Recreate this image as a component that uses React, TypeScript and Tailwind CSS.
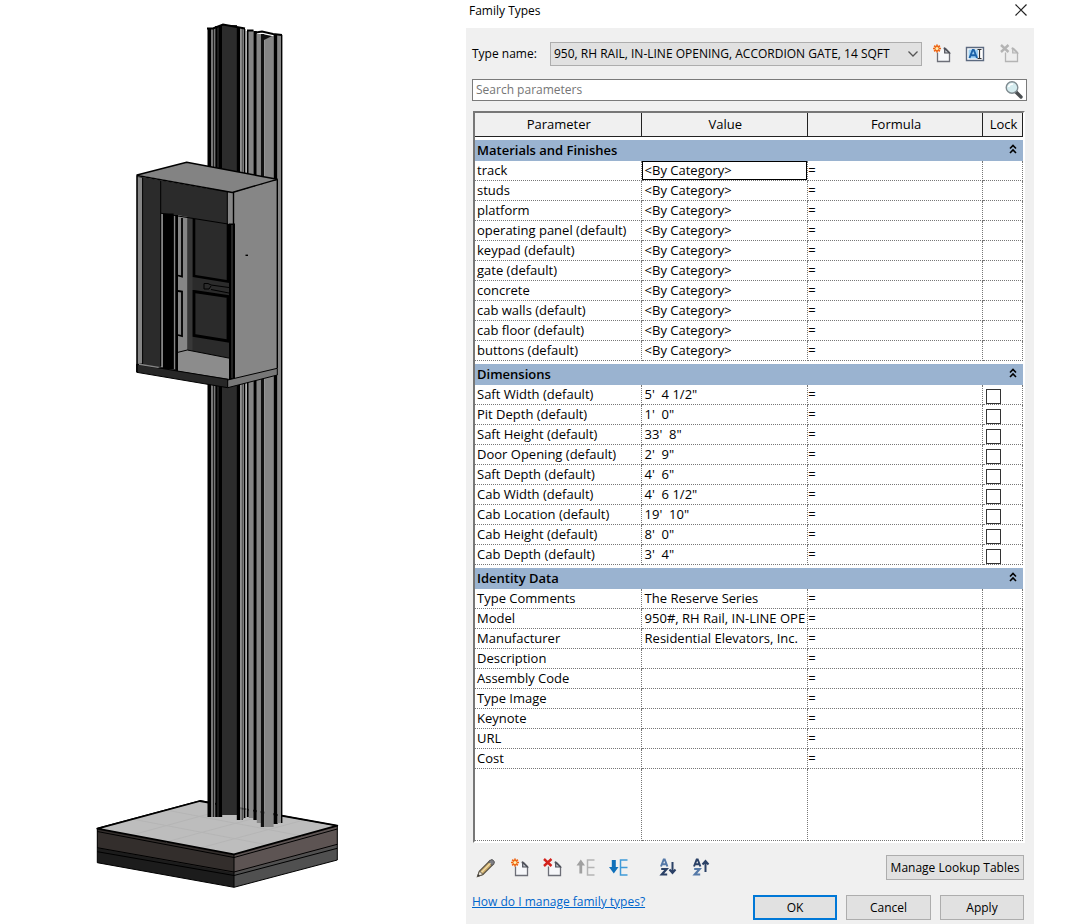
import type { ReactNode } from "react"

type Param = {
    name: string
    value?: string
}

type Group = {
    title: string
    lockable?: boolean
    params: Param[]
}

const byCategory = [
    "track",
    "studs",
    "platform",
    "operating panel (default)",
    "keypad (default)",
    "gate (default)",
    "concrete",
    "cab walls (default)",
    "cab floor (default)",
    "buttons (default)"
]

const groups: Group[] = [
    {
        title: "Materials and Finishes",
        params: byCategory.map((name) => ({ name, value: "<By Category>" }))
    },
    {
        title: "Dimensions",
        lockable: true,
        params: [
            { name: "Saft Width (default)", value: "5'  4 1/2\"" },
            { name: "Pit Depth (default)", value: "1'  0\"" },
            { name: "Saft Height (default)", value: "33'  8\"" },
            { name: "Door Opening (default)", value: "2'  9\"" },
            { name: "Saft Depth (default)", value: "4'  6\"" },
            { name: "Cab Width (default)", value: "4'  6 1/2\"" },
            { name: "Cab Location (default)", value: "19'  10\"" },
            { name: "Cab Height (default)", value: "8'  0\"" },
            { name: "Cab Depth (default)", value: "3'  4\"" }
        ]
    },
    {
        title: "Identity Data",
        params: [
            { name: "Type Comments", value: "The Reserve Series" },
            { name: "Model", value: "950#, RH Rail, IN-LINE OPE" },
            { name: "Manufacturer", value: "Residential Elevators, Inc." },
            { name: "Description" },
            { name: "Assembly Code" },
            { name: "Type Image" },
            { name: "Keynote" },
            { name: "URL" },
            { name: "Cost" }
        ]
    }
]

// [x, width, top, bottom, fill] for each face of the rails, left to right
const rails: [number, number, number, number, string][] = [
    [207.5, 3.5, 28, 817, "#000"],
    [211, 2, 28, 817, "#777"],
    [213, 1, 28, 817, "#222"],
    [214, 1.2, 27, 817, "#777"],
    [215.2, 7, 26, 817, "#000"],
    [217, 2, 27, 817, "#1e1e1e"],
    [222, 15, 25, 815, "#2c2c2c"],
    [236.8, 3.4, 27, 820, "#000"],
    [240.2, 1.6, 28, 820, "#858585"],
    [241.8, 1, 28, 820, "#222"],
    [242.8, 1, 29, 819, "#858585"],
    [243.8, 1.6, 29, 818, "#000"],
    [246.8, 2, 31, 817, "#000"],
    [248.8, 4.6, 30, 818, "#858585"],
    [253.4, 3.4, 31, 820, "#000"],
    [256.8, 4, 34, 823, "#858585"],
    [260.8, 3.4, 34, 827, "#111"],
    [264.2, 9.4, 36, 827, "#858585"],
    [273.6, 4, 34, 824, "#000"],
    [277.6, 3.4, 35, 823, "#858585"],
    [281, 1.4, 35, 823, "#000"]
]

function ElevatorModel() {
    return (
        <svg viewBox="0 0 466 924" className="block w-full" role="img" aria-label="Elevator model">
            {/* concrete pad */}
            <g strokeLinejoin="round">
                <path d="M97.3 828.3 L234 854.3 V887.3 L97.3 862.7Z" fill="#1c1c1c" />
                <path d="M97.3 828.3 L234 854.3 V873 L97.3 848Z" fill="#332e2c" />
                <path d="M234 854.3 L337.3 825.7 V860 L234 887.3Z" fill="#505050" />
                <path d="M234 854.3 L337.3 825.7 V845 L234 873Z" fill="#5d5453" />
                <path d="M97.3 828.3 L200 800.7 L337.3 825.7 L234 854.3Z" fill="#bdbdbd" />
                <path
                    d="M132 819 L268 845 M166 810 L302 836 M132 835 L234 807 M166 842 L270 814 M200 848 L304 820"
                    stroke="#b5b5b5"
                    fill="none"
                />
                <path
                    d="M97.3 831.5 L234 857.5 L337.3 829 M97.3 847.7 L234 872 L337.3 844.3 M97.3 851.7 L234 875.5 L337.3 848.3 M234 854.3 V887"
                    stroke="#000"
                    fill="none"
                />
                <path d="M97.3 828.3 L200 800.7 L337.3 825.7 V860 L234 887.3 L97.3 862.7Z" stroke="#000" fill="none" />
                <path d="M97.3 828.6 L234 854.3 L337.3 825.7 L200 801Z" stroke="#000" strokeWidth="1.8" fill="none" />
            </g>

            {/* rails */}
            <rect x="245.4" y="31" width="1.4" height="780" fill="#d8d8d8" />
            {rails.map(([x, width, top, bottom, fill]) => (
                <rect key={x} x={x} y={top} width={width} height={bottom - top} fill={fill} />
            ))}
            <path d="M207 28.5 H213 L223 24.5 L245 28.5 M247 30.5 H253.5 M256 32.5 L262 31.5 L273 34 L282 35" stroke="#000" strokeWidth="2" fill="none" />
            <path d="M262 34 L272 36 L264 40Z" fill="#111" />

            {/* cab */}
            <path d="M136.7 175 L186.7 162.3 L277.3 179.3 L232.3 192.3Z" fill="#838383" />
            <path d="M136.7 176 L228 192 V380 L136.7 366Z" fill="#2b2b2b" />
            <path d="M137.5 177 L142.5 178 V363 L137.5 364Z" fill="#868686" />
            <path d="M233 192.5 L277.3 180 V368.5 L233 380Z" fill="#868686" />
            <path d="M227.5 192 H233 V224 H227.5Z" fill="#868686" />
            <path d="M177.7 215 L188 217 V352 L177.7 354Z" fill="#868686" />
            <path d="M187.5 217 L230 224 V359 L187.5 351Z" fill="#2b2b2b" />
            <path d="M187.5 217 L192.5 218 V351.5 L187.5 350.5Z" fill="#383838" />
            <path d="M178 352.3 L187.3 350 L230 358.3 V379 L178 371Z" fill="#8c8c8c" />
            <path d="M178 352.3 L187.3 350 L230 358.3" stroke="#000" fill="none" />
            <path d="M161 213 H163 V367 H161Z M174 215 H175.4 V369 H174Z" fill="#858585" />
            <path d="M163 213.5 H173.6 V369 H163Z M175.4 215 H178 V371 H175.4Z" fill="#000" />
            <path d="M178 275.5 L182 276.5 V218 M178 291 L182 291.5 V336 L178 335" stroke="#000" strokeWidth="1.8" fill="none" />
            <path d="M194 219 V276 L228 281.5 V224" stroke="#000" strokeWidth="2.6" fill="none" />
            <path d="M194 291.5 L228 296.5 V341 L194 335.5Z" stroke="#000" strokeWidth="2.8" fill="none" />
            <path d="M204 283.5 H208 L211 285 L229 287.5 M204 283.5 V289 H209 L211 286 M211 289.5 L229 293" stroke="#000" fill="none" />
            <path d="M160.7 181 V366 M142.6 178 V364 M161 213.3 L228 224 M227.3 192 V224" stroke="#000" fill="none" />
            <path d="M229 223.5 H235 V380 H229Z" fill="#000" />
            <path d="M231 225 H233 V378 H231Z" fill="#252525" />
            <path d="M233.5 192 V224 M277.3 180 V368" stroke="#000" strokeWidth="1.4" fill="none" />
            <path d="M136.7 364.3 L227.7 379.3 V387.7 L136.7 372.3Z" fill="#272727" stroke="#000" />
            <path d="M139 363.5 L160 367 L158 368 L139 365Z" fill="#868686" />
            <path d="M227.7 380 L277.3 368.3 V375 L227.7 387.7Z" fill="#777" stroke="#000" />
            <path d="M137 372 V175 L186.7 162.3 L277.3 179.3 L232.3 192.5 L137 175.5" stroke="#000" strokeWidth="1.4" fill="none" strokeLinejoin="round" />
            <path d="M245.5 255.3 H248" stroke="#000" strokeWidth="1.4" />
        </svg>
    )
}

function PageShape({ faded }: { faded?: boolean }) {
    return (
        <>
            <path
                d="M4.5 8.5 V17.5 H16.5 V8.5 L12.5 4.5 H10.5"
                fill={faded ? "#eee" : "#f6f7fa"}
                stroke={faded ? "#b4b4b4" : "#6d6f78"}
                strokeWidth="1.3"
            />
            <path
                d="M11.7 4.5 V9 H16.5Z"
                fill={faded ? "#ddd" : "#c9ccd4"}
                stroke={faded ? "#b4b4b4" : "#4a4c55"}
                strokeWidth="1.2"
            />
        </>
    )
}

function NewIcon() {
    return (
        <svg viewBox="-2 0 20 20" className="size-5">
            <PageShape />
            <path d="M4 0.5 V8.5 M0 4.5 H8 M1.2 1.7 L6.8 7.3 M6.8 1.7 L1.2 7.3" stroke="#ee6412" strokeWidth="1.7" />
            <circle cx="4" cy="4.5" r="1.6" fill="#fff0b0" />
        </svg>
    )
}

function DeleteIcon({ faded }: { faded?: boolean }) {
    return (
        <svg viewBox="-2 0 20 20" className="size-5">
            <PageShape faded={faded} />
            <path d="M0 1 L7.5 8 M7.5 1 L0 8" stroke={faded ? "#b4b4b4" : "#d3221c"} strokeWidth="2.4" />
        </svg>
    )
}

function RenameIcon() {
    return (
        <svg viewBox="0 0 20 20" className="size-5">
            <path d="M1.5 3.5 H18.5 V16.5 H1.5Z" fill="#fff" stroke="#5c6a80" strokeWidth="1.4" />
            <path d="M3.5 5.5 H13 V14.5 H3.5Z" fill="#9fd0f2" />
            <path d="M4.5 14 L7.7 6 H8.8 L12 14 M5.8 11.3 H10.7" fill="none" stroke="#1c62a8" strokeWidth="1.9" />
            <path d="M12.5 5.5 H16.5 M14.5 5.5 V14.5 M12.5 14.5 H16.5" fill="none" stroke="#333" strokeWidth="1.2" />
        </svg>
    )
}

function PencilIcon() {
    return (
        <svg viewBox="0 0 20 20" className="size-5">
            <path d="M1.5 18.5 L3.5 13 L14 2.5 L17.5 6 L7 16.5Z" fill="#c9a866" stroke="#5b5548" strokeWidth="1.2" />
            <path d="M12.5 4 L14.5 2 Q16 1 17.5 2.5 Q19 4 18 5.5 L16 7.5Z" fill="#7d7d84" stroke="#555" />
            <path d="M5 14.8 L14.5 5.3" stroke="#f0dca8" strokeWidth="1.4" />
            <path d="M1.5 18.5 L3.5 13 L7 16.5Z" fill="#efe9dc" stroke="#5b5548" />
            <path d="M1.5 18.5 L2.4 16.2 L4 17.6Z" fill="#333" />
        </svg>
    )
}

function MoveIcon({ down }: { down?: boolean }) {
    return (
        <svg viewBox="-1 0 20 20" className="size-5">
            {down ? (
                <path d="M2.8 2 H6.8 V9 H9.5 L4.8 15.5 L0 9 H2.8Z" fill="#0f70ba" />
            ) : (
                <path d="M4.8 1.5 L9 7.5 H6.2 V15.5 H3.4 V7.5 H0.5Z" fill="#a0a0a0" />
            )}
            <path
                d="M18.5 2 H11.5 V17 H18.5 M11.5 9.5 H18.5"
                fill="none"
                stroke={down ? "#3f9ad8" : "#b4b4b4"}
                strokeWidth="1.5"
            />
        </svg>
    )
}

function SortIcon({ up }: { up?: boolean }) {
    return (
        <svg viewBox="-1 0 20 20" className="size-5">
            <path d="M2 8.5 L4.7 1.5 H5.7 L8.4 8.5 M3.2 6.3 H7.2" fill="none" stroke={up ? "#2b4166" : "#5579a8"} strokeWidth="2" />
            <path d="M2.2 11 H7.6 L2.8 16.5 H8.2" fill="none" stroke={up ? "#5579a8" : "#2b4166"} strokeWidth="2.2" />
            <path
                d={up ? "M13.5 14 V4 M10.5 6.5 L13.5 3 L16.5 6.5" : "M13.5 4 V14 M10.5 11.5 L13.5 15 L16.5 11.5"}
                fill="none"
                stroke="#2b4166"
                strokeWidth="2"
            />
        </svg>
    )
}

function IconButton({ label, disabled, children }: { label: string; disabled?: boolean; children: ReactNode }) {
    return (
        <button type="button" aria-label={label} disabled={disabled} className="size-5 shrink-0">
            {children}
        </button>
    )
}

function ParameterGroup({ group, first }: { group: Group; first: boolean }) {
    const cell = "border-r border-b border-dotted border-[#777] p-0 align-top"

    return (
        <tbody>
            <tr className="h-6">
                <th colSpan={4} scope="colgroup" className="p-0 pt-[3px] text-left">
                    <div className="flex h-[21px] items-start justify-between bg-[#9ab3d0] pr-[6px] pl-[2px] text-[13px] leading-5 font-semibold">
                        {group.title}
                        <button type="button" aria-label={`Collapse ${group.title}`} className="mt-1">
                            <svg viewBox="0 0 8 10" className="h-[10px] w-2" fill="none" stroke="#000" strokeWidth="1.6">
                                <path d="M1 4.5 L4 1.5 L7 4.5 M1 9 L4 6 L7 9" />
                            </svg>
                        </button>
                    </div>
                </th>
            </tr>
            {group.params.map((p, i) => (
                <tr key={p.name} className="h-5 text-[13px] leading-[18px] whitespace-pre">
                    <td className={`${cell} pl-[2px]`}>{p.name}</td>
                    <td className={`${cell} overflow-hidden`}>
                        {first && i === 0 ? (
                            <div className="h-[19px] border border-black pl-[2px] leading-4">{p.value}</div>
                        ) : (
                            <div className="pl-[3px]">{p.value}</div>
                        )}
                    </td>
                    <td className={cell}>=</td>
                    <td className={`${cell} pl-[3px]`}>
                        {group.lockable ? (
                            <input
                                type="checkbox"
                                aria-label={`Lock ${p.name}`}
                                className="mt-1 block size-[15px] appearance-none border border-[#333] bg-white"
                            />
                        ) : null}
                    </td>
                </tr>
            ))}
        </tbody>
    )
}

function ParameterTable() {
    return (
        <div className="mr-[9px] ml-[7px] border-2 border-t-[#777] border-r-[#fff] border-b-[#fff] border-l-[#777] bg-white">
            <table className="w-full table-fixed border-separate border-spacing-0">
                <colgroup>
                    <col className="w-[30.4%]" />
                    <col className="w-[30.4%]" />
                    <col className="w-[31.9%]" />
                    <col className="w-[7.3%]" />
                </colgroup>
                <thead>
                    <tr className="h-6 bg-[#f0f0f0] text-[13px]">
                        {["Parameter", "Value", "Formula", "Lock"].map((h) => (
                            <th key={h} scope="col" className="border-r border-b border-[#222] p-0 pl-[2px] font-normal">
                                {h}
                            </th>
                        ))}
                    </tr>
                </thead>
                {groups.map((g, i) => (
                    <ParameterGroup key={g.title} group={g} first={i === 0} />
                ))}
                <tbody>
                    <tr className="h-[72px]">
                        {[0, 1, 2, 3].map((c) => (
                            <td key={c} className="border-r border-b border-dotted border-[#777]" />
                        ))}
                    </tr>
                </tbody>
            </table>
        </div>
    )
}

function FamilyTypesDialog() {
    const button = "h-[25px] border border-[#adadad] bg-[#e1e1e1] text-[12px]"

    return (
        <section className="min-w-0 flex-[568] bg-[#f0f0f0]">
            <header className="flex h-7 items-center justify-between bg-white pr-[7px] pl-[3px]">
                <h1 className="pb-[6px] text-[12px]">Family Types</h1>
                <button type="button" aria-label="Close" className="mb-2">
                    <svg viewBox="0 0 12 12" className="size-3" stroke="#222" strokeWidth="1.2">
                        <path d="M0.5 0.5 L11.5 11.5 M11.5 0.5 L0.5 11.5" />
                    </svg>
                </button>
            </header>

            <div className="mt-[14px] flex h-6 items-center pr-[15px] pl-[6px] text-[12px]">
                <label htmlFor="type-name" className="w-[78px] shrink-0">
                    Type name:
                </label>
                <div className="relative min-w-0 flex-1">
                    <select
                        id="type-name"
                        className="block h-6 w-full appearance-none border border-[#adadad] bg-[#e1e1e1] pl-[3px] text-[12px]"
                    >
                        <option>950, RH RAIL, IN-LINE OPENING, ACCORDION GATE, 14 SQFT</option>
                    </select>
                    <svg viewBox="0 0 10 6" className="pointer-events-none absolute top-[9px] right-1 h-[6px] w-[10px]" fill="none" stroke="#555" strokeWidth="1.3">
                        <path d="M0.5 0.5 L5 5 L9.5 0.5" />
                    </svg>
                </div>
                <div className="ml-[9px] flex gap-[14px]">
                    <IconButton label="New type">
                        <NewIcon />
                    </IconButton>
                    <IconButton label="Rename type">
                        <RenameIcon />
                    </IconButton>
                    <IconButton label="Delete type" disabled>
                        <DeleteIcon faded />
                    </IconButton>
                </div>
            </div>

            <div className="mr-[7px] ml-[6px] mt-[13px] flex h-[22px] items-center border border-[#7a7a7a] bg-white pr-[2px]">
                <input
                    type="text"
                    aria-label="Search parameters"
                    placeholder="Search parameters"
                    className="min-w-0 flex-1 pl-[3px] text-[12px] outline-none placeholder:text-[#757575]"
                />
                <svg viewBox="0 0 20 20" className="size-5">
                    <path d="M11.5 11.5 L17 17" stroke="#4b4f52" strokeWidth="3.4" strokeLinecap="round" />
                    <circle cx="8" cy="7.5" r="5.8" fill="#d5ecef" stroke="#7f8b90" strokeWidth="1.4" />
                    <path d="M4.5 7 Q5.5 4 9 4" stroke="#fff" strokeWidth="1.6" fill="none" />
                </svg>
            </div>

            <div className="mt-[10px]">
                <ParameterTable />
            </div>

            <div className="mt-[12px] flex h-[25px] items-center pr-[10px] pl-[10px]">
                <div className="flex gap-[13px]">
                    <IconButton label="Edit parameter">
                        <PencilIcon />
                    </IconButton>
                    <IconButton label="New parameter">
                        <NewIcon />
                    </IconButton>
                    <IconButton label="Delete parameter">
                        <DeleteIcon />
                    </IconButton>
                    <IconButton label="Move parameter up" disabled>
                        <MoveIcon />
                    </IconButton>
                    <IconButton label="Move parameter down">
                        <MoveIcon down />
                    </IconButton>
                </div>
                <div className="ml-[30px] flex gap-[13px]">
                    <IconButton label="Sort descending">
                        <SortIcon />
                    </IconButton>
                    <IconButton label="Sort ascending">
                        <SortIcon up />
                    </IconButton>
                </div>
                <button type="button" className={`${button} ml-auto w-[138px]`}>
                    Manage Lookup Tables
                </button>
            </div>

            <div className="mt-[15px] flex items-start gap-[9px] pr-[10px] pb-1 pl-[6px]">
                <a href="#help" className="mr-auto text-[12px] leading-[14px] text-[#0066cc] underline">
                    How do I manage family types?
                </a>
                <button type="button" className="h-[25px] w-[84px] border-2 border-[#0078d7] bg-[#e1e1e1] text-[12px]">
                    OK
                </button>
                <button type="button" className={`${button} w-[85px]`}>
                    Cancel
                </button>
                <button type="button" className={`${button} w-[84px]`}>
                    Apply
                </button>
            </div>
        </section>
    )
}

export default function App() {
    return (
        <main className="flex items-start bg-white pr-[46px] font-['Open_Sans','Noto_Sans',sans-serif] text-black">
            <div className="min-w-0 flex-[466]">
                <ElevatorModel />
            </div>
            <FamilyTypesDialog />
        </main>
    )
}
